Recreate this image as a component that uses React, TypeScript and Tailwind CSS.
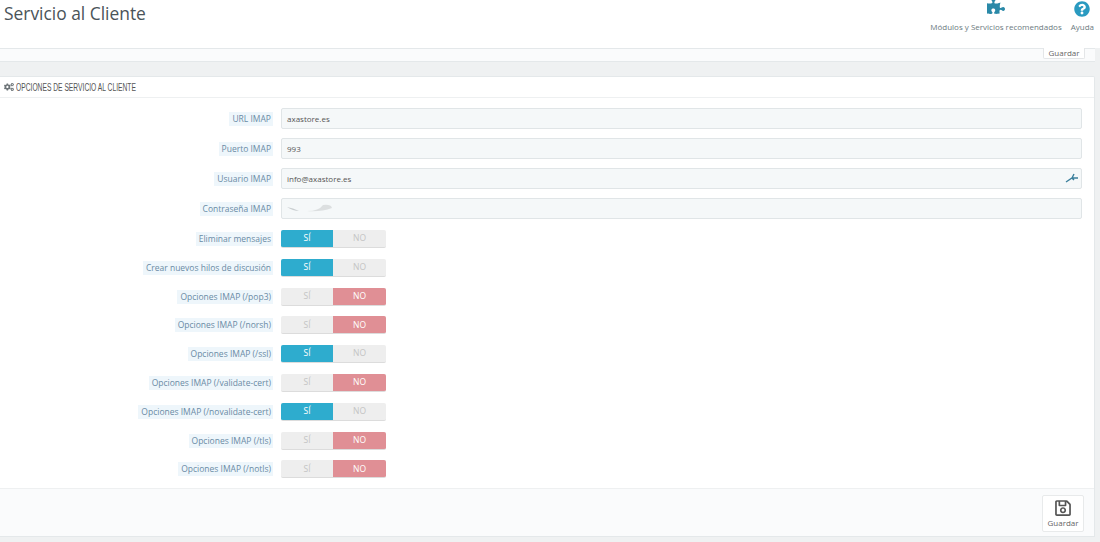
import { FaCogs, FaPuzzlePiece, FaQuestionCircle, FaRegSave } from "react-icons/fa";

const TEXT_FIELDS = [
  { label: "URL IMAP", value: "axastore.es" },
  { label: "Puerto IMAP", value: "993" },
  { label: "Usuario IMAP", value: "info@axastore.es", key: true },
];

const TOGGLES = [
  { label: "Eliminar mensajes", on: true },
  { label: "Crear nuevos hilos de discusión", on: true },
  { label: "Opciones IMAP (/pop3)", on: false },
  { label: "Opciones IMAP (/norsh)", on: false },
  { label: "Opciones IMAP (/ssl)", on: true },
  { label: "Opciones IMAP (/validate-cert)", on: false },
  { label: "Opciones IMAP (/novalidate-cert)", on: true },
  { label: "Opciones IMAP (/tls)", on: false },
  { label: "Opciones IMAP (/notls)", on: false },
];

const Label = ({ text }: { text: string }) => (
  <div className="flex w-[273px] shrink-0 justify-end">
    <span className="bg-[#eef6fb] pl-[3px] pr-[2px] text-[8.5px] leading-[14px] text-[#6a8ba5]">{text}</span>
  </div>
);

const Toggle = ({ on }: { on: boolean }) => (
  <div className="ml-[8px] flex h-[18px] w-[105px] overflow-hidden rounded-[2px] border-b border-[#dcdcdc] bg-[#eeeeee] text-[8.5px]">
    <div className={`flex w-[52px] items-center justify-center ${on ? "bg-[#2eacce] text-white" : "text-[#c4c4c4]"}`}>SÍ</div>
    <div className={`flex w-[53px] items-center justify-center ${on ? "text-[#c4c4c4]" : "bg-[#e08f95] text-white"}`}>NO</div>
  </div>
);

export default function App() {
  return (
    <div className="h-[542px] w-[1100px] overflow-hidden bg-[#eff1f2] font-['Open_Sans',sans-serif] text-[#555555]">
      {/* page head */}
      <header className="flex h-[48px] justify-between bg-white pl-1 pr-1.5">
        <h1 className="pt-[1px] text-[17.4px] leading-[24px] text-[#4a5459]">Servicio al Cliente</h1>
        <div className="flex gap-[9px] text-[8px] text-[#6c7a80]">
          <div className="flex flex-col items-center">
            <FaPuzzlePiece className="-mt-[3px] h-[18px] w-[18px] text-[#2a89a8]" />
            <span className="mt-[6px] leading-[11px]">Módulos y Servicios recomendados</span>
          </div>
          <div className="flex flex-col items-center">
            <FaQuestionCircle className="mt-[1px] h-[16px] w-[16px] text-[#2a9ac0]" />
            <span className="mt-[4px] leading-[11px]">Ayuda</span>
          </div>
        </div>
      </header>

      {/* tail of the panel above */}
      <div className="mr-[5px] flex h-[14px] justify-end border-y border-[#e4e8ea] bg-[#fafbfc] pr-[10px]">
        <div className="-mt-px h-[11px] w-[42px] rounded-b-[2px] border-x border-b border-[#e4e6e8] bg-white text-center text-[8px] leading-[9px] text-[#666666]">
          Guardar
        </div>
      </div>

      {/* options panel */}
      <section className="mr-[5px] mt-[14px] h-[461px] rounded-tr-[2px] border-y border-r border-[#e4e8ea] bg-white">
        <div className="flex h-[21px] items-center gap-[2px] border-b border-[#eef0f1] pl-1">
          <FaCogs className="h-[10px] w-[10px] text-[#6d7478]" />
          <h2 className="origin-left scale-x-[0.67] whitespace-nowrap font-['Liberation_Sans',sans-serif] text-[10px] leading-[21px] text-[#555555]">
            OPCIONES DE SERVICIO AL CLIENTE
          </h2>
        </div>

        <div className="flex flex-col pt-[10px]">
          {TEXT_FIELDS.map((f) => (
            <div key={f.label} className="mb-[9px] flex items-center">
              <Label text={f.label} />
              <div className="relative ml-[8px] h-[21px] w-[801px] rounded-[2px] border border-[#e0e5e7] bg-[#f5f8f9] pl-[5px] text-[8px] leading-[19px] text-[#555555]">
                {f.value}
                {f.key && (
                  <svg viewBox="0 0 14 10" className="absolute right-[2px] top-[4px] h-[10px] w-[14px]">
                    <path d="M1 9 L7 5 L13 5 M9 1 L7 5 L9 7" fill="none" stroke="#3b7f9c" strokeWidth="1.4" />
                  </svg>
                )}
              </div>
            </div>
          ))}

          <div className="mb-[11px] flex items-center">
            <Label text="Contraseña IMAP" />
            <div className="relative ml-[8px] h-[21px] w-[801px] rounded-[2px] border border-[#e0e5e7] bg-[#f5f8f9]">
              <svg viewBox="0 0 50 12" className="absolute left-[3px] top-[3px] h-[12px] w-[50px]">
                <path d="M2 5 Q8 6 14 9 Q8 9 2 5Z" fill="#c9ced0" />
                <path d="M22 9 Q34 9 38 3 Q46 2 47 6 Q36 10 22 9Z" fill="#dcdfe0" />
              </svg>
            </div>
          </div>

          <div className="flex flex-col gap-[10.8px]">
            {TOGGLES.map((t) => (
              <div key={t.label} className="flex items-center">
                <Label text={t.label} />
                <Toggle on={t.on} />
              </div>
            ))}
          </div>
        </div>

        {/* footer */}
        <div className="mt-[10px] flex h-[48px] justify-end border-t border-[#eef0f1] bg-[#fafbfc] pr-[10px] pt-[6px]">
          <div className="flex h-[37px] w-[42px] flex-col items-center rounded-[2px] border border-[#e8eaeb] bg-white pt-[3px] text-[8px] leading-[10px] text-[#666666]">
            <FaRegSave className="h-[18px] w-[18px] text-[#555555]" />
            <span className="mt-[1px]">Guardar</span>
          </div>
        </div>
      </section>
    </div>
  );
}
